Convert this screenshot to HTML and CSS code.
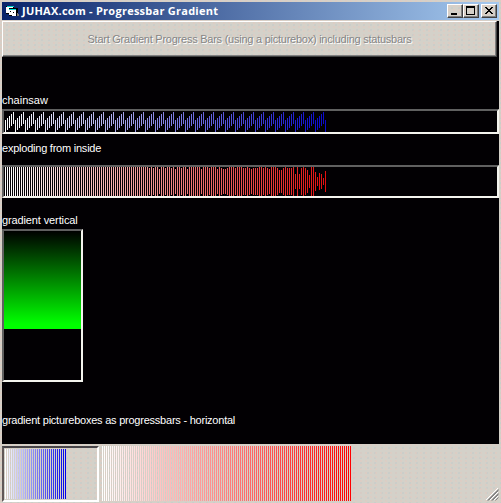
FILE: index.html
```html
<!DOCTYPE html>
<html lang="en">
<head>
<meta charset="utf-8">
<title>JUHAX.com - Progressbar Gradient</title>
<link rel="stylesheet" href="styles.css">
</head>
<body>
<div class="window">
  <header class="titlebar">
    <svg class="app-icon" width="15" height="14" viewBox="0 0 15 14" shape-rendering="crispEdges">
      <path d="M0 2h8v8H0z" fill="#000"/><path d="M0 3h7v6H0z" fill="#fff"/><path d="M1 2h7v1H1z" fill="#0cc"/>
      <path d="M3 4h9v8H3z" fill="#000"/><path d="M3 6h7v6H3z" fill="#fff"/><path d="M3 5h7v1H3z" fill="#0dd"/>
      <path d="M4 7h1v1H4zM7 8h1v1H7zM3 11h3v1H3z" fill="#000"/><path d="M11 9h1v3h-1zM12 10h1v2h-1z" fill="#777"/>
    </svg>
    <h1 class="title">JUHAX.com - Progressbar Gradient</h1>
    <div class="controls">
      <button class="ctl" aria-label="Minimize"><svg width="14" height="12" shape-rendering="crispEdges"><path d="M3 8h6v2H3z"/></svg></button>
      <button class="ctl" aria-label="Maximize"><svg width="14" height="12" shape-rendering="crispEdges"><path fill-rule="evenodd" d="M2 1h9v9H2zM3 3v6h7V3z"/></svg></button>
      <button class="ctl close" aria-label="Close"><svg width="14" height="12" shape-rendering="crispEdges"><path d="M3 2h2v1h1v1h2V3h1V2h2v1h-1v1H9v1H8v1h1v1h1v1h1v1H9V8H8V7H6v1H5v1H3V8h1V7h1V6h1V5H5V4H4V3H3z"/></svg></button>
    </div>
  </header>
  <main class="client">
    <button class="start" disabled><span>Start Gradient Progress Bars (using a picturebox) including statusbars</span></button>
    <p class="label chainsaw-label">chainsaw</p>
    <div class="box chainsaw"><svg id="chainsaw" width="493" height="21" shape-rendering="crispEdges"></svg></div>
    <p class="label exploding-label">exploding from inside</p>
    <div class="box exploding"><svg id="exploding" width="493" height="29" shape-rendering="crispEdges"></svg></div>
    <p class="label vertical-label">gradient vertical</p>
    <div class="box vertical"><div class="green"></div></div>
    <p class="label horizontal-label">gradient pictureboxes as progressbars - horizontal</p>
  </main>
  <footer class="statusbar">
    <div class="panel"><svg id="blue" width="92" height="51" shape-rendering="crispEdges"></svg></div>
    <svg class="red" id="red" width="250" height="55" shape-rendering="crispEdges"></svg>
    <svg class="grip" width="13" height="13" viewBox="0 0 13 13">
      <path d="M0 12L12 0M4 12L12 4M8 12L12 8" stroke="#fff"/><path d="M1.5 12.5L12.5 1.5M2.5 12.5L12.5 2.5M5.5 12.5L12.5 5.5M6.5 12.5L12.5 6.5M9.5 12.5L12.5 9.5" stroke="#858585"/>
    </svg>
  </footer>
</div>
<script src="bars.js"></script>
</body>
</html>
```
FILE: bars.js
```js
function bar(svg, x, y, h, color) {
  const r = document.createElementNS("http://www.w3.org/2000/svg", "rect");
  r.setAttribute("x", x);
  r.setAttribute("y", y);
  r.setAttribute("width", 1);
  r.setAttribute("height", h);
  r.setAttribute("fill", color);
  svg.appendChild(r);
}
const byId = (id) => document.getElementById(id);
const mix = (t, end) => "rgb(" + end.map((e) => Math.round(255 + (e - 255) * t)).join(",") + ")";

// Sawtooth: five bars per tooth, each two pixels higher than the last
for (let i = 0; i <= 160; i++) {
  bar(byId("chainsaw"), 1 + i * 2, 9 - (i % 5) * 2, 12, mix(i / 160, [10, 10, 205]));
}

// Inset of each bar from the top and bottom edges
const early = [0,0,0,0,0,0,0,0,0,0,0,0,0,0,1,0,1,0,0,2,0,0,1,0,0,1,0,2,0,0,1,0,0,2,0,0,0,0,0,0,2,0,0,0,1,0,0,0,2,0,1,2,2,1,0,0,0,1,0,0];
const late = [0,1,1,0,1,2,1,1,1,0,0,1,0,1,2,0,0,0,1,3,3,1,0,1,1,1,0,7,0,7,1,0,1,3,8,0,0,5,10,6,7,11,4];
const insets = new Array(161 - early.length - late.length).fill(0).concat(early, late);
insets.forEach((n, i) => bar(byId("exploding"), 1 + i * 2, n, 29 - n * 2, mix(i / 160, [225, 15, 15])));

for (let i = 0; i <= 30; i++) bar(byId("blue"), 1 + i * 2, 0, 50, mix(i / 30, [0, 0, 235]));
for (let i = 0; i <= 124; i++) bar(byId("red"), i * 2, 0, 55, mix(i / 124, [255, 0, 0]));
```
FILE: styles.css
```css
* { box-sizing: border-box; }
body {
  margin: 0;
  width: 501px;
  height: 503px;
  overflow: hidden;
  font: 11px "Liberation Sans", sans-serif;
}
.window, .start, .ctl {
  background-color: #d4d1c9;
  background-image:
    radial-gradient(circle at 1px 1px, #e4c9be 0.5px, transparent 0.9px),
    radial-gradient(circle at 4px 3px, #c1caca 0.5px, transparent 0.9px);
  background-size: 5px 4px, 7px 5px;
}
.window {
  display: flex;
  flex-direction: column;
  width: 501px;
  height: 503px;
  padding: 2px 2px 0;
}
.titlebar {
  display: flex;
  align-items: center;
  height: 18px;
  margin-bottom: 1px;
  padding: 0 2px 0 4px;
  background: linear-gradient(90deg, #0a246a, #a6caf0);
}
.title {
  flex: 1;
  margin: 0 0 0 1px;
  color: #fff;
  font: bold 11px/18px "Open Sans", sans-serif;
  letter-spacing: 0.25px;
  white-space: nowrap;
}
.controls { display: flex; }
.ctl {
  width: 16px;
  height: 14px;
  padding: 0;
  border: 1px solid;
  border-color: #fff #404040 #404040 #fff;
  box-shadow: inset -1px -1px #808080;
}
.ctl svg { display: block; }
.close { margin-left: 2px; }
.client {
  width: 497px;
  height: 423px;
  background: #020003;
}
.start {
  display: block;
  width: 495px;
  height: 36px;
  padding: 0;
  border: 1px solid;
  border-color: #fff #404040 #404040 #fff;
  box-shadow: inset -1px -1px #808080;
  color: #858585;
  font: 11px/14px "Liberation Sans", sans-serif;
  letter-spacing: -0.245px;
  text-shadow: 1px 1px #fff;
  white-space: nowrap;
}
.label {
  height: 14px;
  margin: 0;
  color: #fff;
  line-height: 14px;
  letter-spacing: -0.23px;
  white-space: nowrap;
}
.chainsaw-label { margin-top: 36px; letter-spacing: 0; }
.exploding-label { margin-top: 7px; }
.vertical-label { margin-top: 15px; letter-spacing: -0.12px; }
.horizontal-label { margin-top: 31px; }
.box {
  border: 2px solid;
  border-color: #606060 #f4f4ee #f4f4ee #606060;
}
.box svg { display: block; }
.chainsaw { height: 25px; margin-top: 2px; }
.exploding { height: 33px; margin-top: 10px; }
.vertical { width: 81px; height: 153px; margin-top: 2px; }
.green { height: 98px; background: linear-gradient(#000, #0f0 95%); }
.statusbar {
  display: flex;
  width: 499px;
  height: 59px;
  padding-top: 2px;
}
.panel {
  width: 97px;
  height: 56px;
  padding: 1px 0 0;
  border: 2px solid;
  border-color: #484448 #fff #fff #605858;
}
.panel svg { display: block; }
.red { margin-left: 3px; }
.grip { margin: 42px 2px 0 auto; }
```
